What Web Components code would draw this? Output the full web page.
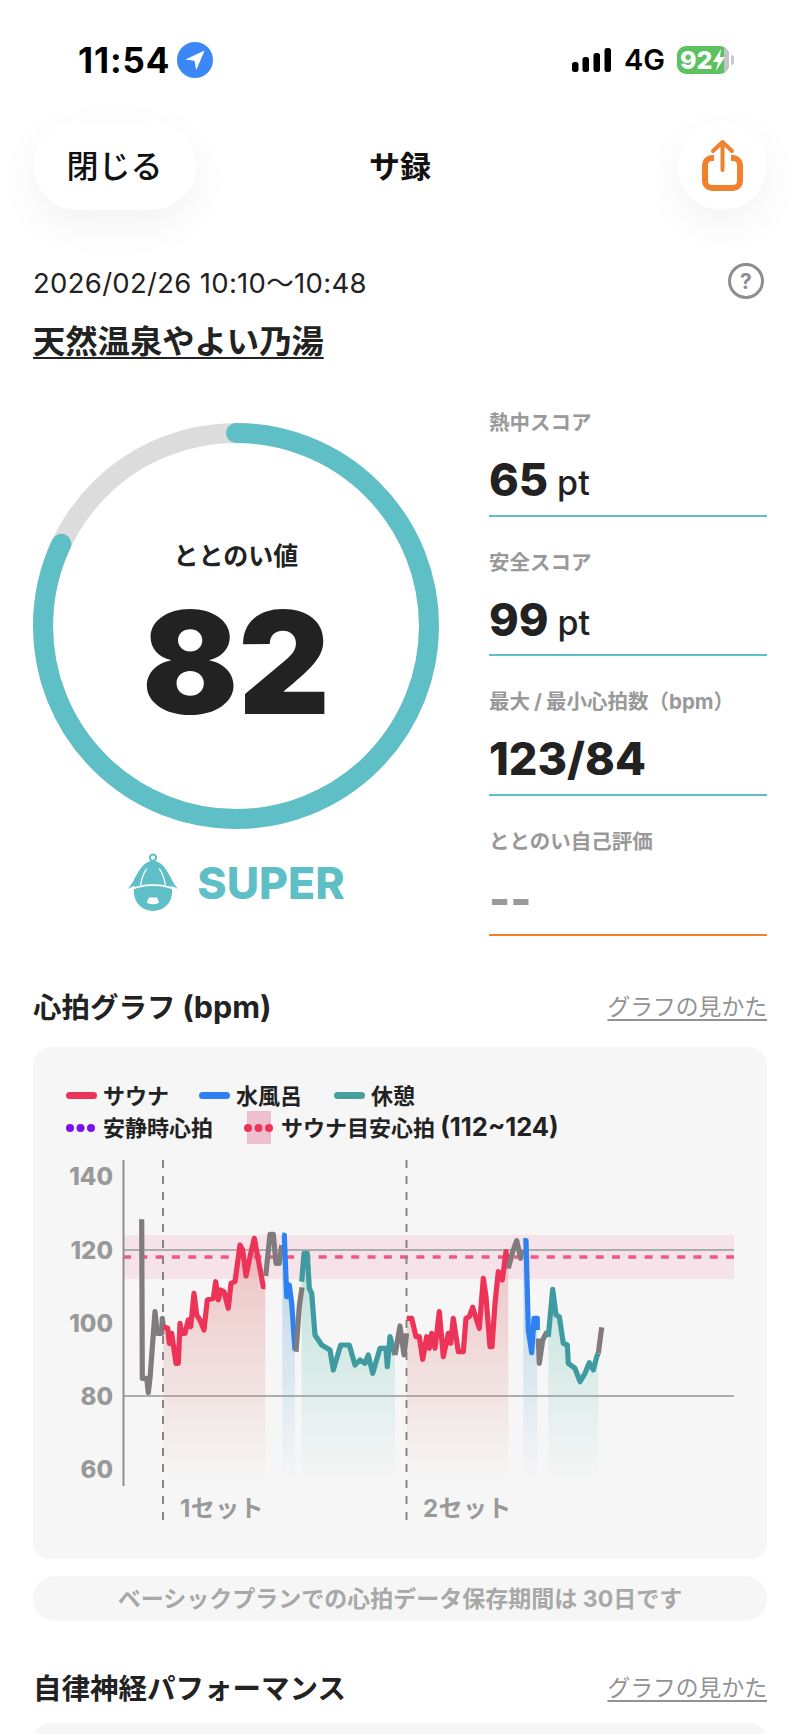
<!DOCTYPE html>
<html lang="ja">
<head>
<meta charset="utf-8">
<title>サ録</title>
<style>
  html, body { margin: 0; padding: 0; background: #fff; }
  body {
    width: 800px; height: 1734px; overflow: hidden;
    font-family: Inter, "Noto Sans CJK JP", sans-serif;
    color: #222;
  }
  main { display: block; padding: 0 33px; }
</style>
</head>
<body>
<status-bar></status-bar>
<main>
  <nav-bar></nav-bar>
  <session-head></session-head>
  <score-panel>
    <score-ring slot="ring" value="82"></score-ring>
    <stat-item label="熱中スコア" unit="pt">65</stat-item>
    <stat-item label="安全スコア" unit="pt">99</stat-item>
    <stat-item><span slot="label">最大<span style="margin:0 4px">/</span>最小心拍数（bpm）</span>123/84</stat-item>
    <stat-item label="ととのい自己評価" empty>--</stat-item>
  </score-panel>
  <section-head style="margin-top:50px">心拍グラフ <span style="font-size:30.5px">(bpm)</span></section-head>
  <heart-chart></heart-chart>
  <note-pill>ベーシックプランでの心拍データ保存期間は 30日です</note-pill>
  <section-head style="margin-top:46px">自律神経パフォーマンス</section-head>
  <empty-card></empty-card>
</main>

<script>
// ステータスバー
class StatusBar extends HTMLElement {
  constructor() {
    super();
    const shadow = this.attachShadow({ mode: "open" });
    shadow.innerHTML = `
      <style>
        :host { display: flex; height: 122px; width: 800px; box-sizing: border-box; align-items: center; justify-content: space-between; padding: 0 66px 2px 78px; font-family: Inter, sans-serif; color: #000; }
        .left, .right { display: flex; align-items: center; }
        .time { font-size: 35px; font-weight: 700; letter-spacing: 0.9px; line-height: 36px; }
        .loc { width: 36px; height: 36px; border-radius: 50%; background: #3b87f5; margin-left: 7px; display: flex; align-items: center; justify-content: center; }
        .net { font-size: 29px; font-weight: 600; margin: 0 12px 0 13px; line-height: 30px; }
        .batt { position: relative; width: 52px; height: 28px; border-radius: 9px; overflow: hidden; background: #5cc160; color: #fff; font-weight: 800; font-size: 25px; line-height: 28px; padding-left: 3px; box-sizing: border-box; display: flex; align-items: center; }
        .batt i { position: absolute; right: 0; top: 0; bottom: 0; width: 5px; background: #c4c4c8; }
        .batt svg { position: absolute; right: 3px; top: 3px; }
        .tip { width: 3px; height: 10px; margin-left: 2px; background: #c8c8c8; border-radius: 0 3px 3px 0; }
      </style>
      <div class="left">
        <span class="time">11:54</span>
        <span class="loc"><svg width="24" height="24" viewBox="0 0 20 20"><path d="M18 2 L2 9.5 L9.6 10.6 L11 18.5 Z" fill="#fff"/></svg></span>
      </div>
      <div class="right">
        <svg width="39" height="24" viewBox="0 0 39 24"><g fill="#000"><rect x="0" y="14" width="6.5" height="10" rx="2.5"/><rect x="10.5" y="9" width="6.5" height="15" rx="2.5"/><rect x="21.5" y="5" width="6.5" height="19" rx="2.5"/><rect x="32.5" y="0" width="6.5" height="24" rx="2.5"/></g></svg>
        <span class="net">4G</span>
        <span class="batt">92<i></i><svg width="14" height="22" viewBox="0 0 14 22"><path d="M9 0 L1 13 H6 L4 22 L13 8 H8 Z" fill="#fff"/></svg></span>
        <span class="tip"></span>
      </div>`;
  }
}

// 上部ナビ
class NavBar extends HTMLElement {
  constructor() {
    super();
    const shadow = this.attachShadow({ mode: "open" });
    shadow.innerHTML = `
      <style>
        :host { display: grid; grid-template-columns: 163px 1fr 163px; height: 88px; align-items: center; }
        .btn { height: 88px; background: #fff; display: flex; align-items: center; justify-content: center; box-shadow: 0 14px 44px rgba(0,0,0,.055); }
        .close { border-radius: 44px; font-size: 32px; font-weight: 500; color: #111; padding-bottom: 4px; box-sizing: border-box; }
        .share { width: 89px; border-radius: 50%; justify-self: end; }
        .title { text-align: center; font-size: 31px; font-weight: 700; color: #111; padding-bottom: 4px; }
      </style>
      <div class="btn close">閉じる</div>
      <div class="title">サ録</div>
      <div class="btn share">
        <svg width="42" height="54" viewBox="0 0 42 54" fill="none" stroke="#f0812d">
          <path d="M12 19 H10 a7 7 0 0 0 -7 7 V42 a7 7 0 0 0 7 7 H31 a7 7 0 0 0 7 -7 V26 a7 7 0 0 0 -7 -7 H29" stroke-width="6"/>
          <path d="M20.5 31 V4 M11 12 L20.5 3 L30 12" stroke-width="4" stroke-linecap="round" stroke-linejoin="round"/>
        </svg>
      </div>`;
  }
}

// 日時と施設名
class SessionHead extends HTMLElement {
  constructor() {
    super();
    const shadow = this.attachShadow({ mode: "open" });
    shadow.innerHTML = `
      <style>
        :host { display: block; margin-top: 53px; }
        .row { display: flex; justify-content: space-between; align-items: center; height: 36px; }
        .date { font-size: 27.5px; font-weight: 400; letter-spacing: .3px; color: #222; }
        .help { width: 36px; height: 36px; box-sizing: border-box; border: 3.5px solid #8e8e8e; border-radius: 50%; color: #8e8e8e; font-size: 21px; font-weight: 700; display: flex; align-items: center; justify-content: center; margin-right: 3px; }
        .place { margin-top: 20px; font-size: 32.3px; line-height: 46px; font-weight: 700; color: #222; text-decoration: underline; text-underline-offset: 4px; text-decoration-thickness: 2px; }
      </style>
      <div class="row"><span class="date">2026/02/26 10:10〜10:48</span><span class="help">?</span></div>
      <div class="place">天然温泉やよい乃湯</div>`;
  }
}

// スコア全体
class ScorePanel extends HTMLElement {
  constructor() {
    super();
    const shadow = this.attachShadow({ mode: "open" });
    shadow.innerHTML = `
      <style>
        :host { display: grid; grid-template-columns: 406px 278px; column-gap: 50px; margin-top: 44px; }
        .left { padding-top: 14px; }
        .rank { display: flex; align-items: center; justify-content: center; gap: 18px; margin-top: 24px; color: #5fbfc6; font-size: 44.5px; font-weight: 800; line-height: 58px; }
        .rank span { position: relative; top: 1px; }
        .right { display: flex; flex-direction: column; gap: 32px; }
      </style>
      <div class="left">
        <slot name="ring"></slot>
        <div class="rank">
          <svg width="52" height="58" viewBox="0 0 50 56">
            <circle cx="25" cy="37.5" r="18.5" fill="#5fbfc6"/>
            <circle cx="25" cy="4.5" r="3" fill="none" stroke="#5fbfc6" stroke-width="2"/>
            <path d="M0 35 C7 31 11 8 25 7.5 C39 8 43 31 50 35 C40 30 33 29 25 29 C17 29 10 30 0 35 Z" fill="#5fbfc6"/>
            <path d="M0 36.5 C9 32 17 31 25 31 C33 31 41 32 50 36.5" fill="none" stroke="#fff" stroke-width="1.8"/>
            <path d="M13 31 C14 25 16 19 19 15 M37 31 C36 25 34 19 31 15" fill="none" stroke="#fff" stroke-width="1.2"/>
            <path d="M21 43 H29 L31 48 Q25 51 19 48 Z" fill="#fff"/>
          </svg>
          <span>SUPER</span>
        </div>
      </div>
      <div class="right"><slot></slot></div>`;
  }
}

// ととのいリング
class ScoreRing extends HTMLElement {
  constructor() {
    super();
    const shadow = this.attachShadow({ mode: "open" });
    const v = this.getAttribute("value");
    shadow.innerHTML = `
      <style>
        :host { display: block; position: relative; width: 406px; height: 406px; }
        svg { display: block; }
        .center { position: absolute; inset: 0; display: flex; flex-direction: column; align-items: center; padding-top: 115px; box-sizing: border-box; }
        .cap { font-size: 25px; line-height: 36px; font-weight: 700; color: #222; }
        .num { margin-top: 18px; font-size: 142px; line-height: 140px; font-weight: 900; color: #222; }
      </style>
      <svg width="406" height="406" viewBox="0 0 406 406" fill="none">
        <circle cx="203" cy="203" r="193" stroke="#dcdcdc" stroke-width="20"/>
        <circle cx="203" cy="203" r="193" stroke="#5fbfc6" stroke-width="20" stroke-linecap="round" pathLength="100" stroke-dasharray="${v} 100" transform="rotate(-90 203 203)"/>
      </svg>
      <div class="center"><div class="cap">ととのい値</div><div class="num">${v}</div></div>`;
  }
}

// 右カラムの数値
class StatItem extends HTMLElement {
  constructor() {
    super();
    const shadow = this.attachShadow({ mode: "open" });
    const unit = this.getAttribute("unit");
    const empty = this.hasAttribute("empty");
    shadow.innerHTML = `
      <style>
        :host { display: block; height: 107.7px; box-sizing: border-box; border-bottom: 2px solid ${empty ? "#f0812d" : "#5fbfc6"}; }
        .label { font-size: 20.5px; line-height: 28px; font-weight: 700; color: #999; white-space: nowrap; }
        .value { margin-top: 13px; height: 60px; display: flex; align-items: center; font-size: 45px; font-weight: 800; color: ${empty ? "#999" : "#222"}; line-height: 60px; }
        .unit { font-size: 34px; font-weight: 500; margin-left: 9px; position: relative; top: 3px; }
      </style>
      <div class="label"><slot name="label">${this.getAttribute("label") || ""}</slot></div>
      <div class="value"><slot></slot>${unit ? `<span class="unit">${unit}</span>` : ""}</div>`;
  }
}

// セクション見出し
class SectionHead extends HTMLElement {
  constructor() {
    super();
    const shadow = this.attachShadow({ mode: "open" });
    shadow.innerHTML = `
      <style>
        :host { display: flex; justify-content: space-between; align-items: center; height: 40px; }
        .t { font-size: 28.5px; font-weight: 700; color: #222; }
        .l { font-size: 22.8px; color: #929292; text-decoration: underline; text-underline-offset: 4px; text-decoration-thickness: 1.5px; }
      </style>
      <div class="t"><slot></slot></div><div class="l">グラフの見かた</div>`;
  }
}

// 凡例
class LegendItem extends HTMLElement {
  constructor() {
    super();
    const shadow = this.attachShadow({ mode: "open" });
    const c = this.getAttribute("color");
    const dots = this.hasAttribute("dots");
    const band = this.hasAttribute("band");
    const mark = dots
      ? `<svg width="29" height="8" viewBox="0 0 29 8" fill="${c}"><circle cx="4" cy="4" r="4"/><circle cx="14.5" cy="4" r="4"/><circle cx="25" cy="4" r="4"/></svg>`
      : `<span class="bar"></span>`;
    shadow.innerHTML = `
      <style>
        :host { display: inline-flex; align-items: center; font-size: 22px; line-height: 32px; font-weight: 700; color: #222; white-space: nowrap; }
        .m { position: relative; width: ${dots ? 29 : 31}px; height: 32px; margin-right: ${dots ? 8 : 6}px; display: flex; align-items: center; justify-content: center; }
        .m svg { position: relative; display: block; }
        .bar { width: 31px; height: 7px; border-radius: 4px; background: ${c}; }
        .band { position: absolute; left: 2.5px; width: 24px; top: -1px; height: 33px; background: #eebfcf; }
      </style>
      <span class="m">${band ? '<span class="band"></span>' : ""}${mark}</span><span><slot></slot></span>`;
  }
}

// 心拍グラフ
const pts = (bx, s) => s.trim().split(/\s+/).map(p => {
  const [x, y] = p.split(",").map(Number);
  return [bx + x / 3, 1200 + y / 3];
});
const RED = "#ee3358", BLUE = "#2f80f0", TEAL = "#3f9ba0", GRAY = "#807c7e";
const TRACES = [
  [GRAY, null, pts(100, "125,58 127,535 140,535 145,578 150,535 165,335 172,400 185,400 187,355 190,380")],
  [RED, "r", pts(100, "190,380 203,385 208,430 215,400 228,490 235,490 240,370 245,400 255,400 265,360 272,380 282,280 290,345 300,360 312,390 322,300 340,295 347,245 355,300 362,270 372,275 385,325 393,250 405,245 420,135 428,150 438,228 450,170 463,115 475,180 490,260 496,260")],
  [GRAY, null, pts(250, "47,228 60,103 70,103 78,190 88,190 95,135")],
  [BLUE, "b", pts(250, "97,105 103,105 110,290 118,255 125,310 135,450")],
  [GRAY, null, pts(250, "138,455 148,320 156,262")],
  [TEAL, "t", pts(250, "155,245 162,160 172,160 178,265 185,280 195,405 215,435 240,450 250,510 272,435 298,435 315,495 330,480 345,490 355,465 368,520 390,445 408,445 412,500 420,410 435,465")],
  [GRAY, null, pts(250, "435,465 450,378 462,465 470,400")],
  [RED, "r", pts(380, "80,355 95,355 108,410 118,410 128,478 140,410 148,445 155,400 165,445 178,335 190,470 205,400 212,430 220,355 235,455 250,455 258,355 268,350 278,322 285,345 298,385 310,235 318,290 330,440 336,440 345,310 355,215 367,240 378,155 385,205")],
  [GRAY, null, pts(380, "385,205 398,155 410,122 422,175 425,150")],
  [BLUE, "b", pts(380, "430,122 438,122 445,390 455,458 462,355 472,355 472,390")],
  [GRAY, null, pts(380, "475,415 478,490 488,420 498,400 505,410")],
  [TEAL, "t", pts(380, "505,410 518,268 528,345 538,350 550,430 562,435 565,490 585,505 600,545 615,520 628,488 640,510 650,470 655,460")],
  [GRAY, null, pts(380, "655,460 665,382")]
];
const FILL_BOTTOM = 1482;

class HeartChart extends HTMLElement {
  constructor() {
    super();
    const shadow = this.attachShadow({ mode: "open" });
    const line = p => p.map(a => a[0].toFixed(1) + "," + a[1].toFixed(1)).join(" ");
    const fills = TRACES.filter(t => t[1]).map(t => {
      const p = t[2];
      const poly = line(p) + ` ${p[p.length - 1][0].toFixed(1)},${FILL_BOTTOM} ${p[0][0].toFixed(1)},${FILL_BOTTOM}`;
      return `<polygon points="${poly}" fill="url(#g${t[1]})"/>`;
    }).join("");
    const traces = TRACES.map(t => `<polyline points="${line(t[2])}" fill="none" stroke="${t[0]}" stroke-width="5.2" stroke-linejoin="round"/>`).join("");
    const ticks = [[140, 1185], [120, 1259], [100, 1332], [80, 1405], [60, 1478]]
      .map(a => `<text x="113" y="${a[1]}" text-anchor="end" class="tick">${a[0]}</text>`).join("");
    const stop = (id, c) => `<linearGradient id="g${id}" gradientUnits="userSpaceOnUse" x1="0" y1="1235" x2="0" y2="${FILL_BOTTOM}"><stop offset="0" stop-color="${c}" stop-opacity=".42"/><stop offset="1" stop-color="${c}" stop-opacity="0"/></linearGradient>`;
    shadow.innerHTML = `
      <style>
        :host { display: block; margin-top: 21px; background: #f6f6f6; border-radius: 18px; padding: 33px 0 19px; height: 512px; box-sizing: border-box; }
        .legend { padding-left: 33px; display: flex; flex-direction: column; }
        .row { display: flex; height: 32px; }
        .row.a { gap: 32px; }
        .row.a legend-item:first-child { margin-right: -2px; }
        .row.b { gap: 31px; }
        svg { display: block; margin-top: 6px; }
        .tick { font: 800 24px Inter, sans-serif; fill: #999; }
        .set { font: 700 24px Inter, "Noto Sans CJK JP", sans-serif; fill: #999; letter-spacing: .4px; }
      </style>
      <div class="legend">
        <div class="row a">
          <legend-item color="${RED}">サウナ</legend-item>
          <legend-item color="${BLUE}">水風呂</legend-item>
          <legend-item color="#46a0a0">休憩</legend-item>
        </div>
        <div class="row b">
          <legend-item color="#7a10f0" dots>安静時心拍</legend-item>
          <legend-item color="${RED}" dots band>サウナ目安心拍 <span style="font-size:25.5px">(112~124)</span></legend-item>
        </div>
      </div>
      <svg width="734" height="390" viewBox="33 1150 734 390">
        <defs>${stop("r", "#df7a7a")}${stop("b", "#5fa6d8")}${stop("t", "#62bfae")}</defs>
        <rect x="123" y="1235" width="611" height="44" fill="#f5e3e9"/>
        <path d="M123 1250 H734 M123 1396 H734" stroke="#adadad" stroke-width="2"/>
        <path d="M123 1257 H734" stroke="#f0568a" stroke-width="3.5" stroke-dasharray="8 8.3"/>
        <path d="M123.5 1160 V1486" stroke="#8f8f8f" stroke-width="2"/>
        <path d="M163 1160 V1527 M406.5 1160 V1527" stroke="#858585" stroke-width="2" stroke-dasharray="8 8"/>
        ${fills}
        ${traces}
        ${ticks}
        <text x="180" y="1517" class="set">1セット</text>
        <text x="423" y="1517" class="set">2セット</text>
      </svg>`;
  }
}

// 保存期間の案内
class NotePill extends HTMLElement {
  constructor() {
    super();
    const shadow = this.attachShadow({ mode: "open" });
    shadow.innerHTML = `
      <style>
        :host { display: flex; align-items: center; justify-content: center; height: 45px; box-sizing: border-box; padding-bottom: 2px; margin-top: 17px; background: #f6f6f6; border-radius: 23px; font-size: 23px; font-weight: 700; color: #a8a8a8; white-space: nowrap; }
      </style>
      <slot></slot>`;
  }
}

// 画面下で切れる次のカード
class EmptyCard extends HTMLElement {
  constructor() {
    super();
    const shadow = this.attachShadow({ mode: "open" });
    shadow.innerHTML = `
      <style>
        :host { display: block; height: 60px; margin-top: 16px; background: #f6f6f6; border-radius: 18px; }
      </style>`;
  }
}

customElements.define("status-bar", StatusBar);
customElements.define("nav-bar", NavBar);
customElements.define("session-head", SessionHead);
customElements.define("score-panel", ScorePanel);
customElements.define("score-ring", ScoreRing);
customElements.define("stat-item", StatItem);
customElements.define("section-head", SectionHead);
customElements.define("legend-item", LegendItem);
customElements.define("heart-chart", HeartChart);
customElements.define("note-pill", NotePill);
customElements.define("empty-card", EmptyCard);
</script>
</body>
</html>
